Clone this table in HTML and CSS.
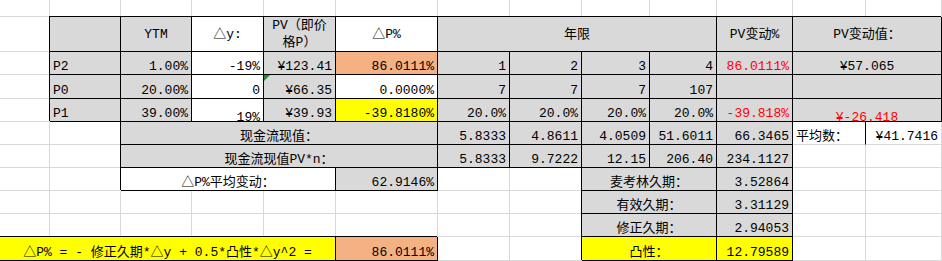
FILE: index.html
```html
<!DOCTYPE html>
<html lang="zh-CN">
<head>
<meta charset="utf-8">
<title>凸性与久期</title>
<link rel="stylesheet" href="styles.css">
</head>
<body>
<div class="sheet">
  <!-- row 1 -->
  <div class="c"></div><div class="c"></div><div class="c"></div><div class="c"></div><div class="c"></div><div class="c"></div><div class="c"></div><div class="c"></div><div class="c"></div><div class="c"></div><div class="c"></div><div class="c"></div><div class="c"></div>
  <!-- row 2 -->
  <div class="c"></div>
  <div class="c b g"></div>
  <div class="c b g h m">YTM</div>
  <div class="c b h m">△y:</div>
  <div class="c b g h m two">PV（即价<br>格P）</div>
  <div class="c b h m">△P%</div>
  <div class="c b g h m s4">年限</div>
  <div class="c b g h m">PV变动%</div>
  <div class="c b g h m s2">PV变动值：</div>
  <!-- row 3 -->
  <div class="c"></div>
  <div class="c b g l">P2</div>
  <div class="c b g">1.00%</div>
  <div class="c b">-19%</div>
  <div class="c b g">¥123.41</div>
  <div class="c b s">86.0111%</div>
  <div class="c b g">1</div>
  <div class="c b g">2</div>
  <div class="c b g">3</div>
  <div class="c b g">4</div>
  <div class="c b g red">86.0111%</div>
  <div class="c b g m s2">¥57.065</div>
  <!-- row 4 -->
  <div class="c"></div>
  <div class="c b g l">P0</div>
  <div class="c b g">20.00%</div>
  <div class="c b">0</div>
  <div class="c b g flag">¥66.35</div>
  <div class="c b">0.0000%</div>
  <div class="c b g">7</div>
  <div class="c b g">7</div>
  <div class="c b g">7</div>
  <div class="c b g">107</div>
  <div class="c b g"></div>
  <div class="c b g s2"></div>
  <!-- row 5 -->
  <div class="c"></div>
  <div class="c b g l">P1</div>
  <div class="c b g">39.00%</div>
  <div class="c b"><span class="low">19%</span></div>
  <div class="c b g">¥39.93</div>
  <div class="c b y">-39.8180%</div>
  <div class="c b g">20.0%</div>
  <div class="c b g">20.0%</div>
  <div class="c b g">20.0%</div>
  <div class="c b g">20.0%</div>
  <div class="c b g red">-39.818%</div>
  <div class="c b g m s2 red"><span class="low">¥-26.418</span></div>
  <!-- row 6 -->
  <div class="c"></div>
  <div class="c"></div>
  <div class="c b g m s4">现金流现值：</div>
  <div class="c b g">5.8333</div>
  <div class="c b g">4.8611</div>
  <div class="c b g">4.0509</div>
  <div class="c b g">51.6011</div>
  <div class="c b g">66.3465</div>
  <div class="c l br">平均数：</div>
  <div class="c">¥41.7416</div>
  <!-- row 7 -->
  <div class="c"></div>
  <div class="c"></div>
  <div class="c b g m s4">现金流现值PV*n：</div>
  <div class="c b g">5.8333</div>
  <div class="c b g">9.7222</div>
  <div class="c b g">12.15</div>
  <div class="c b g">206.40</div>
  <div class="c b g">234.1127</div>
  <div class="c"></div>
  <div class="c"></div>
  <!-- row 8 -->
  <div class="c"></div>
  <div class="c"></div>
  <div class="c b m s3">△P%平均变动：</div>
  <div class="c b g">62.9146%</div>
  <div class="c"></div>
  <div class="c"></div>
  <div class="c b g m s2">麦考林久期：</div>
  <div class="c b g">3.52864</div>
  <div class="c"></div>
  <div class="c"></div>
  <!-- row 9 -->
  <div class="c"></div><div class="c"></div><div class="c"></div><div class="c"></div><div class="c"></div><div class="c"></div><div class="c"></div><div class="c"></div>
  <div class="c b g m s2">有效久期：</div>
  <div class="c b g">3.31129</div>
  <div class="c"></div>
  <div class="c"></div>
  <!-- row 10 -->
  <div class="c"></div><div class="c"></div><div class="c"></div><div class="c"></div><div class="c"></div><div class="c"></div><div class="c"></div><div class="c"></div>
  <div class="c b g m s2">修正久期：</div>
  <div class="c b g">2.94053</div>
  <div class="c"></div>
  <div class="c"></div>
  <!-- row 11 -->
  <div class="c b y m s5">△P% = - 修正久期*△y + 0.5*凸性*△y^2 =</div>
  <div class="c b s">86.0111%</div>
  <div class="c"></div>
  <div class="c"></div>
  <div class="c b y m s2">凸性：</div>
  <div class="c b y">12.79589</div>
  <div class="c"></div>
  <div class="c"></div>
</div>
</body>
</html>
```

FILE: styles.css
```css
html, body {
  margin: 0;
  padding: 0;
  background: #ffffff;
}

.sheet {
  display: grid;
  grid-template-columns: 50px 71px 71px 72px 72px 102px 72px 72px 68px 67px 76px 73px 76px;
  grid-template-rows: 17px 35px 23px 24px 23px 23px 23px 23px 23px 23px 24px;
  width: 942px;
  font-family: "Liberation Mono", "Noto Sans CJK SC", monospace;
  font-size: 13px;
  color: #000;
}

.c {
  box-sizing: border-box;
  border-right: 1px solid #d9d9d9;
  border-bottom: 1px solid #d9d9d9;
  display: flex;
  align-items: flex-end;
  justify-content: flex-end;
  padding: 0 3px 0 3px;
  line-height: 15px;
  white-space: nowrap;
  min-width: 0;
  background: #ffffff;
}

.b {
  border-right-color: #000;
  border-bottom-color: #000;
  box-shadow: -1px -1px 0 0 #000;
}

.br {
  border-right-color: #000;
}

.g { background: #d9d9d9; }
.y { background: #ffff00; }
.s { background: #f4b183; }
.red { color: #ff0000; }

.h { align-items: center; }
.m { justify-content: center; text-align: center; }
.l { justify-content: flex-start; }

.two {
  line-height: 17px;
  white-space: normal;
}

.s2 { grid-column: span 2; }
.s3 { grid-column: span 3; }
.s4 { grid-column: span 4; }
.s5 { grid-column: span 5; }

.low {
  margin-bottom: -4px;
}

.flag {
  position: relative;
}

.flag::before {
  content: "";
  position: absolute;
  left: 0;
  top: 0;
  width: 0;
  height: 0;
  border-top: 6px solid #1e8a3a;
  border-right: 6px solid transparent;
}
```
